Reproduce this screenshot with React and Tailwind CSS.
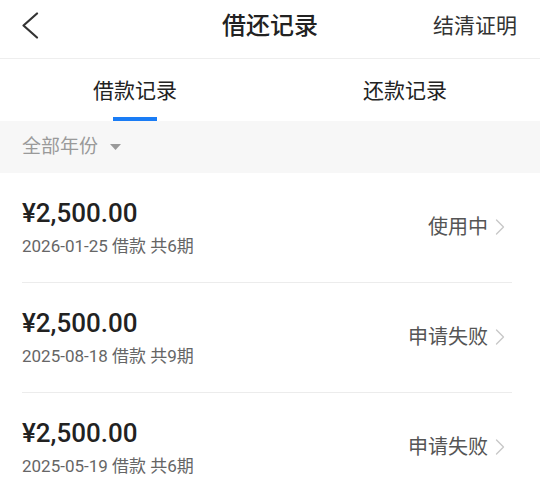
import React from "react";

const records = [
  { amount: "¥2,500.00", date: "2026-01-25", periods: 6, status: "使用中" },
  { amount: "¥2,500.00", date: "2025-08-18", periods: 9, status: "申请失败" },
  { amount: "¥2,500.00", date: "2025-05-19", periods: 6, status: "申请失败" },
];

const font = { fontFamily: "Roboto, 'Noto Sans CJK SC', sans-serif" };

const RecordRow = ({ record }) => (
  <div className="ml-[22px] mr-[28px] flex items-center border-b border-[#ececec] pt-[24px] pb-[25px]">
    <div className="flex flex-1 flex-col gap-[6px]">
      <span className="text-[26px] leading-[32px] font-medium text-[#222]">
        {record.amount}
      </span>
      <span className="text-[17px] leading-[22px] text-[#666]">
        {record.date} 借款 共{record.periods}期
      </span>
    </div>
    <div className="flex items-center gap-[7px] pr-[7px]">
      <span className="text-[20px] leading-[28px] text-[#555]">{record.status}</span>
      <svg width="10" height="16" viewBox="0 0 10 16" fill="none">
        <polyline
          points="1.5,1 8.5,8 1.5,15"
          stroke="#c8c8c8"
          strokeWidth="1.4"
          strokeLinecap="round"
          strokeLinejoin="round"
        />
      </svg>
    </div>
  </div>
);

export default function App() {
  return (
    <div className="w-[540px] h-[500px] overflow-hidden bg-white" style={font}>
      {/* header */}
      <div className="flex h-[59px] items-center border-b border-[#eeeeee] pb-[6px]">
        <div className="w-[120px] pl-[22px]">
          <svg width="18" height="28" viewBox="0 0 18 28" fill="none">
            <polyline
              points="15,1.5 1.5,13.5 15,25.5"
              stroke="#333"
              strokeWidth="2.2"
              strokeLinecap="round"
              strokeLinejoin="round"
            />
          </svg>
        </div>
        <div className="flex-1 text-center text-[24px] leading-[32px] font-medium text-[#222]">
          借还记录
        </div>
        <div className="w-[120px] pr-[23px] text-right text-[21px] leading-[28px] text-[#333]">
          结清证明
        </div>
      </div>

      {/* tabs */}
      <div className="flex h-[62px]">
        <div className="flex flex-1 flex-col items-center justify-end">
          <span className="text-[21px] leading-[28px] text-[#222]">借款记录</span>
          <span className="mt-[12px] h-[4px] w-[44px] bg-[#1a7cf5]" />
        </div>
        <div className="flex flex-1 flex-col items-center justify-end">
          <span className="text-[21px] leading-[28px] text-[#222]">还款记录</span>
          <span className="mt-[12px] h-[4px] w-[44px]" />
        </div>
      </div>

      {/* year filter */}
      <div className="flex h-[52px] items-center gap-[12px] bg-[#f7f7f7] pl-[22px]">
        <span className="text-[19px] leading-[26px] text-[#9a9a9a]">全部年份</span>
        <svg width="11" height="6" viewBox="0 0 11 6">
          <polygon points="0,0 11,0 5.5,6" fill="#9a9a9a" />
        </svg>
      </div>

      {/* list */}
      <div className="flex flex-col">
        {records.map((r, i) => (
          <RecordRow key={i} record={r} />
        ))}
      </div>
    </div>
  );
}
